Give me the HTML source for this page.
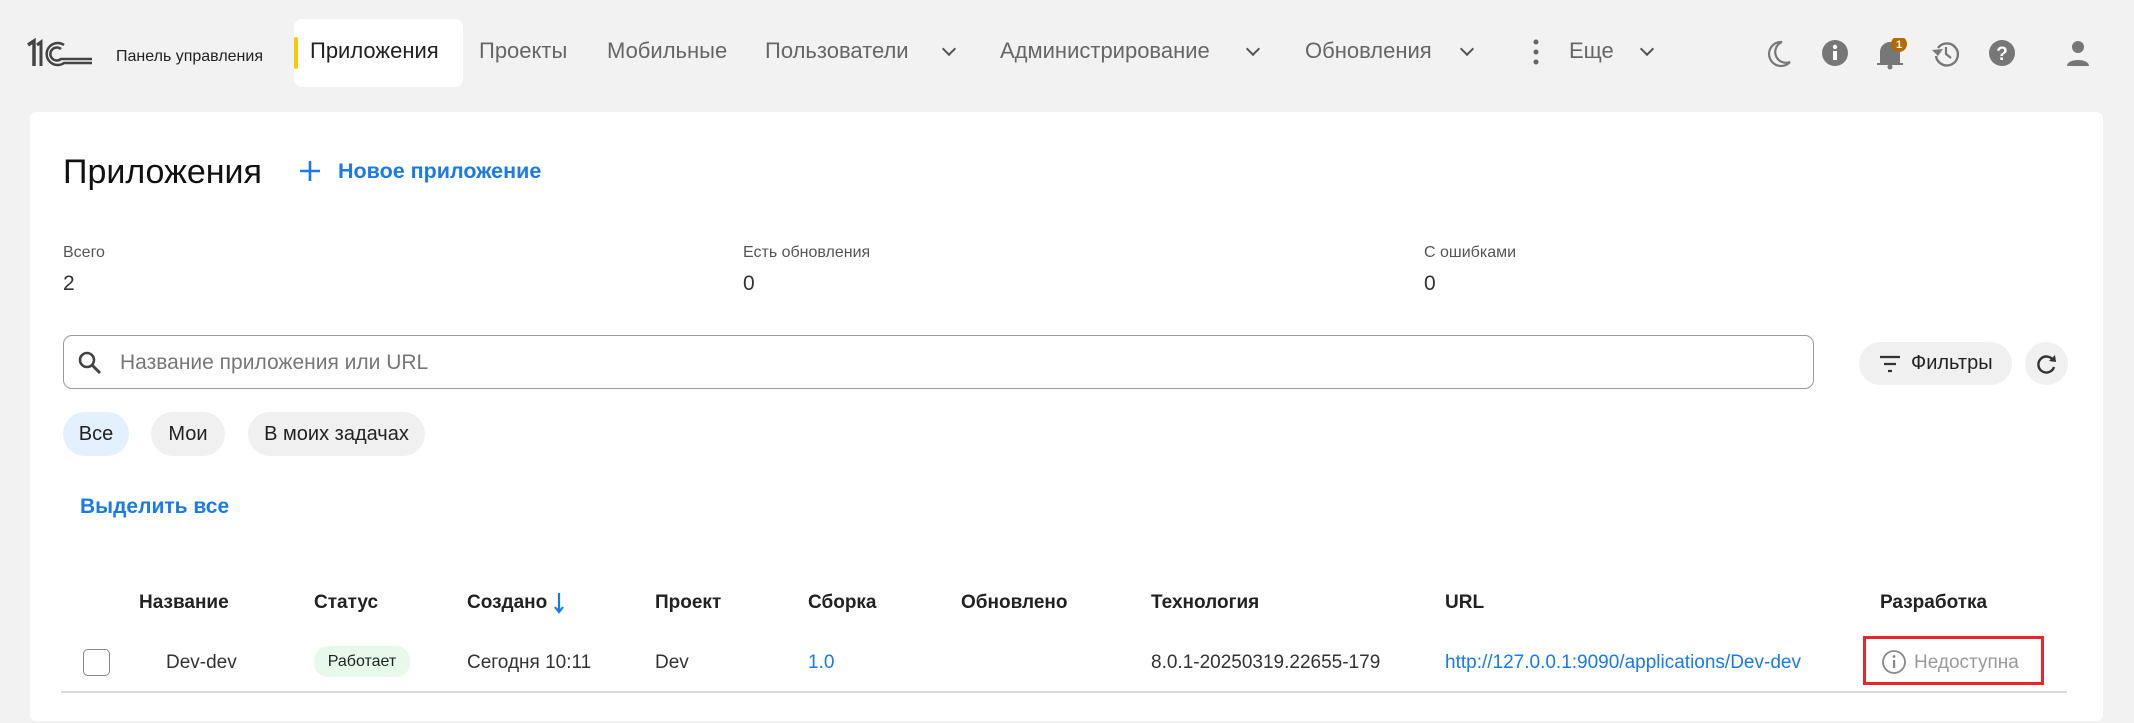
<!DOCTYPE html>
<html><head><meta charset="utf-8"><style>
*{margin:0;padding:0;box-sizing:border-box}
body{width:2134px;height:723px;background:#f2f2f2;font-family:"Liberation Sans",sans-serif;position:relative;overflow:hidden;color:#222}
.a{position:absolute;white-space:nowrap}
.nav{font-size:22px;color:#666;top:38px}
.chev{position:absolute;top:44px;width:10px;height:10px;border-right:2px solid #555;border-bottom:2px solid #555;transform:rotate(45deg)}
.card{position:absolute;left:30px;top:112px;width:2073px;height:609px;background:#fff;border-radius:6px}
.lbl{font-size:16px;color:#555}
.num{font-size:21px;color:#333}
.th{font-size:19px;font-weight:bold;color:#222;top:592px}
.td{font-size:19px;color:#333;top:652px}
.blue{color:#1a7ae6}
.chip{position:absolute;top:412px;height:44px;border-radius:22px;background:#f0f0f0;font-size:20px;line-height:44px;text-align:center;color:#222}
</style></head><body>
<svg class="a" style="left:26px;top:38px" width="68" height="30" viewBox="0 0 68 30"><g fill="none" stroke="#444"><path d="M2 7 L8 3 V28" stroke-width="3.5"/><path d="M11 7 L15 4 V28" stroke-width="3"/><path d="M38 7 A11 11 0 1 0 38 25 H66" stroke-width="2.5"/><path d="M35 11 A6.5 6.5 0 1 0 35 21 H66" stroke-width="2.5"/></g></svg>
<div class="a" style="left:116px;top:48px;font-size:16px;color:#222">Панель управления</div>
<div class="a" style="left:294px;top:19px;width:169px;height:68px;background:#fff;border-radius:8px"></div>
<div class="a" style="left:294px;top:37px;width:4px;height:32px;background:#f5cc00;border-radius:2px"></div>
<div class="a nav" style="left:310px;color:#222">Приложения</div>
<div class="a nav" style="left:479px">Проекты</div>
<div class="a nav" style="left:607px">Мобильные</div>
<div class="a nav" style="left:765px">Пользователи</div><div class="chev" style="left:944px"></div>
<div class="a nav" style="left:1000px">Администрирование</div><div class="chev" style="left:1248px"></div>
<div class="a nav" style="left:1305px">Обновления</div><div class="chev" style="left:1462px"></div>
<svg class="a" style="left:1532px;top:38px" width="8" height="28"><circle cx="4" cy="4" r="2.5" fill="#666"/><circle cx="4" cy="14" r="2.5" fill="#666"/><circle cx="4" cy="24" r="2.5" fill="#666"/></svg>
<div class="a nav" style="left:1569px">Еще</div><div class="chev" style="left:1642px"></div>
<svg class="a" style="left:1762px;top:38px" width="340" height="32" viewBox="0 0 340 32">
<path d="M20 4 A12 12 0 1 0 28 24 A10 10 0 0 1 20 4Z" fill="none" stroke="#777" stroke-width="2.2"/>
<circle cx="73" cy="15" r="13" fill="#777"/><rect x="71" y="13" width="4" height="9" fill="#fff"/><circle cx="73" cy="9" r="2.2" fill="#fff"/>
<path d="M119 26 V14 A9 9 0 0 1 137 14 V26 Z M115 26 H141" fill="#777" stroke="#777" stroke-width="2"/><circle cx="128" cy="29" r="2.5" fill="#777"/>
<circle cx="137" cy="6" r="8" fill="#b36a00"/><text x="137" y="10" font-size="11" fill="#fff" text-anchor="middle" font-family="Liberation Sans" font-weight="bold">1</text>
<path d="M176 10 A11 11 0 1 1 174 18" fill="none" stroke="#777" stroke-width="2.4"/><path d="M170 12 L176 18 L181 11" fill="#777"/><path d="M184 9 V16 L189 20" fill="none" stroke="#777" stroke-width="2.2"/>
<circle cx="240" cy="15" r="13" fill="#777"/><text x="240" y="22" font-size="19" fill="#fff" text-anchor="middle" font-family="Liberation Sans" font-weight="bold">?</text>
<circle cx="316" cy="9" r="6" fill="#777"/><path d="M305 28 C305 20 327 20 327 28 Z" fill="#777"/>
</svg>

<div class="card"></div>
<div class="a" style="left:63px;top:153px;font-size:34px;color:#111">Приложения</div>
<svg class="a" style="left:299px;top:160px" width="22" height="22"><path d="M11 1V21M1 11H21" stroke="#1a7ae6" stroke-width="2.6"/></svg>
<div class="a blue" style="left:338px;top:159px;font-size:21.5px;font-weight:bold">Новое приложение</div>

<div class="a lbl" style="left:63px;top:244px">Всего</div><div class="a num" style="left:63px;top:272px">2</div>
<div class="a lbl" style="left:743px;top:244px">Есть обновления</div><div class="a num" style="left:743px;top:272px">0</div>
<div class="a lbl" style="left:1424px;top:244px">С ошибками</div><div class="a num" style="left:1424px;top:272px">0</div>

<div class="a" style="left:63px;top:335px;width:1751px;height:54px;border:1.5px solid #999;border-radius:9px"></div>
<svg class="a" style="left:77px;top:350px" width="26" height="26"><circle cx="10" cy="10" r="7" fill="none" stroke="#444" stroke-width="2.6"/><path d="M15 15L23 23" stroke="#444" stroke-width="3"/></svg>
<div class="a" style="left:120px;top:351px;font-size:21px;color:#777">Название приложения или URL</div>
<div class="a" style="left:1859px;top:342px;width:153px;height:43px;border-radius:22px;background:#f0f0f0"></div>
<svg class="a" style="left:1879px;top:355px" width="22" height="18"><path d="M1 2H21M5 9H17M9 16H13" stroke="#333" stroke-width="2.2"/></svg>
<div class="a" style="left:1911px;top:352px;font-size:20px;color:#222">Фильтры</div>
<div class="a" style="left:2025px;top:342px;width:43px;height:43px;border-radius:50%;background:#f0f0f0"></div>
<svg class="a" style="left:2035px;top:352px" width="24" height="24"><path d="M18 8 A8 8 0 1 0 19 15" fill="none" stroke="#333" stroke-width="2.4"/><path d="M14 9 L21 10 L20 3 Z" fill="#333"/></svg>

<div class="chip" style="left:63px;width:66px;background:#e3f0fd">Все</div>
<div class="chip" style="left:151px;width:74px">Мои</div>
<div class="chip" style="left:248px;width:177px">В моих задачах</div>
<div class="a blue" style="left:80px;top:495px;font-size:21px;font-weight:bold">Выделить все</div>

<div class="a th" style="left:139px">Название</div>
<div class="a th" style="left:314px">Статус</div>
<div class="a th" style="left:467px">Создано</div>
<svg class="a" style="left:553px;top:592px" width="12" height="22"><path d="M6 1V19M2 15L6 20L10 15" stroke="#1a7ae6" stroke-width="2.2" fill="none"/></svg>
<div class="a th" style="left:655px">Проект</div>
<div class="a th" style="left:808px">Сборка</div>
<div class="a th" style="left:961px">Обновлено</div>
<div class="a th" style="left:1151px">Технология</div>
<div class="a th" style="left:1445px">URL</div>
<div class="a th" style="left:1880px">Разработка</div>

<div class="a" style="left:83px;top:649px;width:27px;height:27px;border:1.5px solid #888;border-radius:5px"></div>
<div class="a td" style="left:166px">Dev-dev</div>
<div class="a" style="left:314px;top:646px;width:96px;height:31px;border-radius:14px;background:#e6f9ea;font-size:16px;line-height:31px;text-align:center;color:#222">Работает</div>
<div class="a td" style="left:467px">Сегодня 10:11</div>
<div class="a td" style="left:655px">Dev</div>
<div class="a td blue" style="left:808px">1.0</div>
<div class="a td" style="left:1151px">8.0.1-20250319.22655-179</div>
<div class="a td blue" style="left:1445px">http://127.0.0.1:9090/applications/Dev-dev</div>
<div class="a" style="left:1863px;top:636px;width:181px;height:49px;border:3px solid #e8262b"></div>
<svg class="a" style="left:1881px;top:649px" width="26" height="26"><circle cx="13" cy="13" r="11" fill="none" stroke="#888" stroke-width="1.8"/><rect x="12" y="11" width="2.2" height="8" fill="#888"/><circle cx="13" cy="7.5" r="1.4" fill="#888"/></svg>
<div class="a td" style="left:1914px;color:#999">Недоступна</div>
<div class="a" style="left:61px;top:691px;width:2006px;height:2px;background:#ddd"></div>
</body></html>
